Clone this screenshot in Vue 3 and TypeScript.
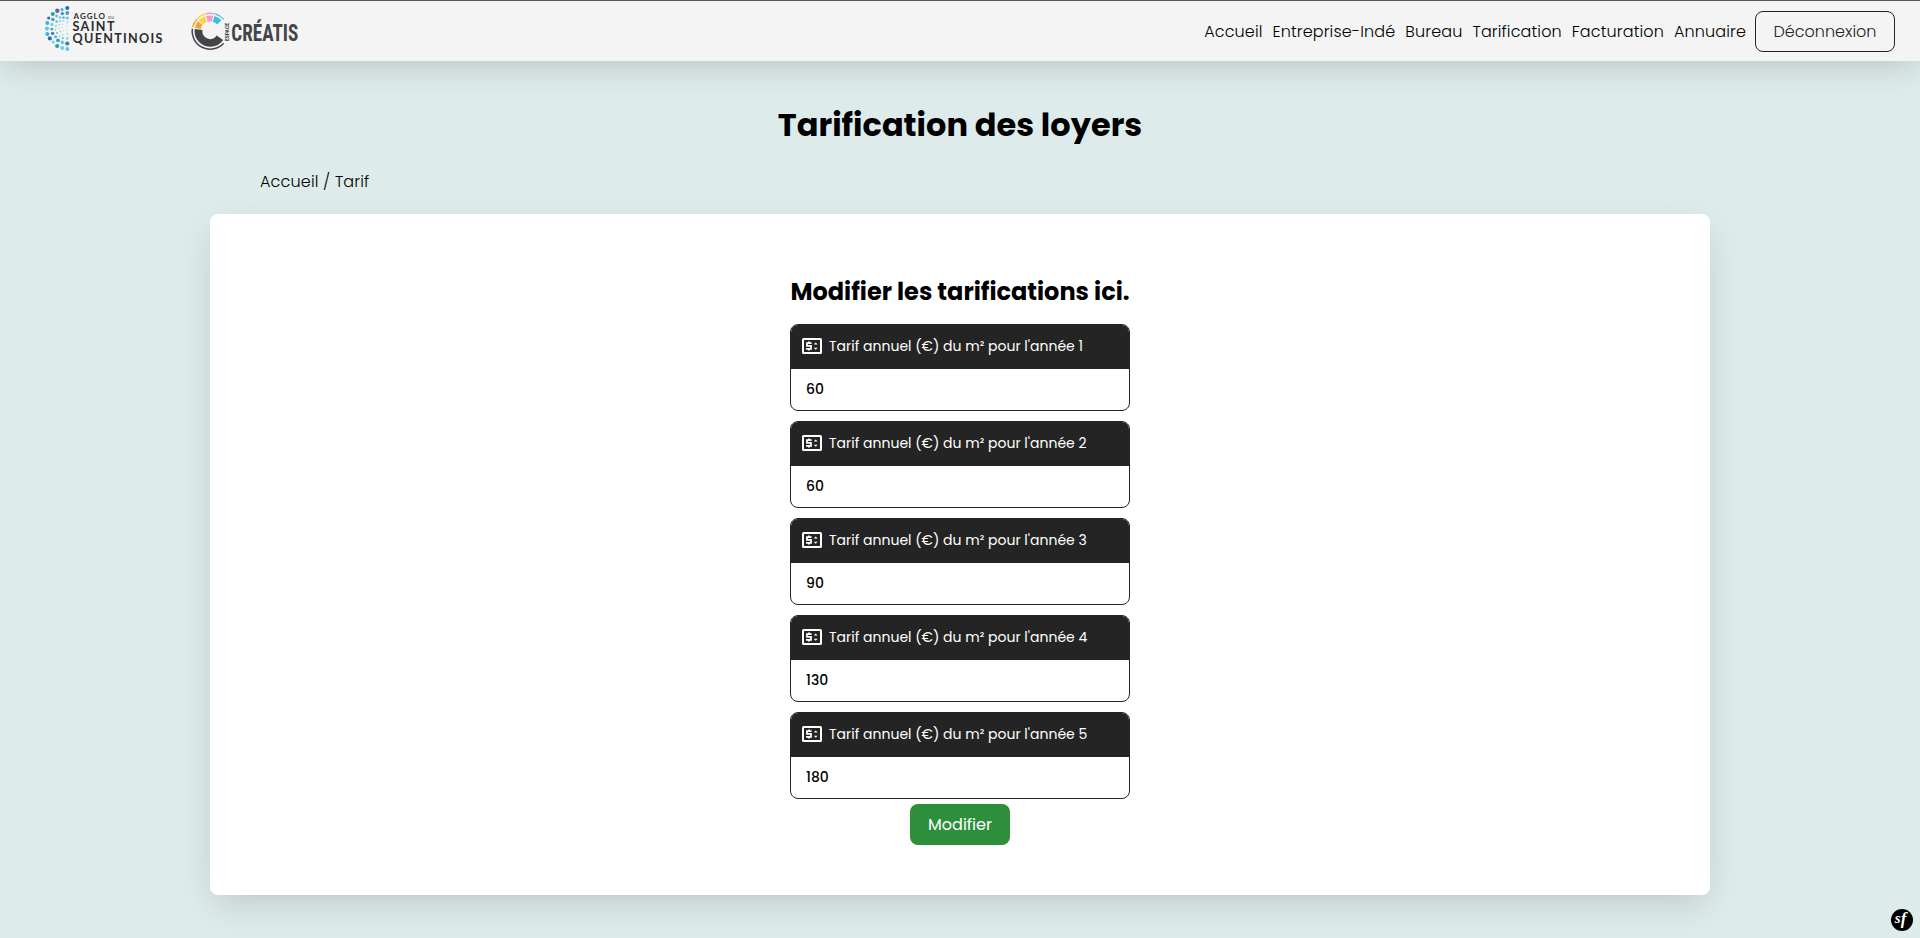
<script setup lang="ts">
import { ref } from 'vue'

interface Rate {
  year: number
  amount: string
}

interface Dot {
  x: number
  y: number
  r: number
  c: string
}

const links: string[] = ['Accueil', 'Entreprise-Indé', 'Bureau', 'Tarification', 'Facturation', 'Annuaire']

const rates = ref<Rate[]>([
  { year: 1, amount: '60' },
  { year: 2, amount: '60' },
  { year: 3, amount: '90' },
  { year: 4, amount: '130' },
  { year: 5, amount: '180' },
])

const dots: Dot[] = [
  { x: 67.3, y: 8, r: 2.1, c: '#2173b9' },
  { x: 62, y: 9.6, r: 1.5, c: '#35b3dc' },
  { x: 57.3, y: 10.8, r: 2.2, c: '#6f5bab' },
  { x: 52.8, y: 14, r: 2, c: '#27a58c' },
  { x: 62.3, y: 13.6, r: 1.6, c: '#2b8fcb' },
  { x: 67.3, y: 13, r: 1.9, c: '#3f9dd7' },
  { x: 48.7, y: 18, r: 1.6, c: '#2173b9' },
  { x: 56.7, y: 16, r: 1.4, c: '#56c4e5' },
  { x: 60, y: 17.5, r: 1.2, c: '#6bcbd6' },
  { x: 67.3, y: 18, r: 1.5, c: '#65c5e8' },
  { x: 63.6, y: 17.6, r: 1.2, c: '#4f9dcc' },
  { x: 52.8, y: 19.5, r: 1.8, c: '#3aa3d8' },
  { x: 47.3, y: 23, r: 2, c: '#3bb5df' },
  { x: 52, y: 24.4, r: 1.7, c: '#75cde9' },
  { x: 56.6, y: 21.6, r: 1.2, c: '#4fc0bc' },
  { x: 47, y: 28.6, r: 2.1, c: '#62c6e8' },
  { x: 51.8, y: 29, r: 1.5, c: '#35b3dc' },
  { x: 47.3, y: 34, r: 2, c: '#35b3dc' },
  { x: 52.6, y: 33.4, r: 1.7, c: '#2e83c4' },
  { x: 49.8, y: 38.4, r: 2.1, c: '#2173b9' },
  { x: 55.6, y: 36.7, r: 1.5, c: '#48bfd9' },
  { x: 53.2, y: 42, r: 1.6, c: '#75cde9' },
  { x: 58, y: 40.3, r: 1.9, c: '#4495ce' },
  { x: 57.2, y: 46, r: 2.1, c: '#27a58c' },
  { x: 62.3, y: 42.4, r: 1.8, c: '#62c6e8' },
  { x: 67.3, y: 43.5, r: 2.1, c: '#2c7fc0' },
  { x: 62.3, y: 48, r: 1.9, c: '#75cde9' },
  { x: 67.3, y: 49, r: 2, c: '#65c5e8' },
  { x: 67.3, y: 38.5, r: 1.4, c: '#8cd6ec' },
  { x: 62.8, y: 38, r: 1.1, c: '#5cc3bd' },
  { x: 59.6, y: 36.2, r: 0.9, c: '#8ad7d1' },
  { x: 55.8, y: 26, r: 1, c: '#8bd4d5' },
  { x: 55.5, y: 29.6, r: 0.9, c: '#80d2c8' },
  { x: 57, y: 33, r: 1, c: '#65c5c0' },
  { x: 60, y: 21, r: 1, c: '#79cfce' },
  { x: 63.5, y: 21, r: 0.9, c: '#9bdcd9' },
  { x: 67.3, y: 22.3, r: 1.1, c: '#a7dcee' },
  { x: 59, y: 24.5, r: 0.8, c: '#8edbc5' },
  { x: 62.3, y: 24.2, r: 0.8, c: '#abdedf' },
  { x: 59, y: 28, r: 0.8, c: '#95dad6' },
  { x: 62.2, y: 27.6, r: 0.7, c: '#a3dfd1' },
  { x: 60.2, y: 31.5, r: 0.8, c: '#7bcfca' },
  { x: 63.6, y: 31, r: 0.7, c: '#b3e2df' },
  { x: 63, y: 34.7, r: 0.8, c: '#8ad7d1' },
  { x: 67.3, y: 26, r: 0.8, c: '#bde3ec' },
  { x: 67.3, y: 29.5, r: 0.7, c: '#bde3ec' },
  { x: 67.3, y: 34, r: 1, c: '#a7dcee' },
]

// Arc of the Créatis ring between two angles in degrees, clockwise from the right.
function arc(radius: number, from: number, to: number): string {
  const at = (a: number) => {
    const t = (a * Math.PI) / 180
    return `${(210.2 + radius * Math.cos(t)).toFixed(2)} ${(31.2 + radius * Math.sin(t)).toFixed(2)}`
  }
  return `M${at(from)}A${radius} ${radius} 0 ${to - from > 180 ? 1 : 0} 1 ${at(to)}`
}

const ring = [
  { from: 193, to: 219, color: '#f2a33a' },
  { from: 224, to: 250, color: '#fbd53f' },
  { from: 255, to: 281, color: '#f19bc9' },
  { from: 286, to: 316, color: '#3bbfe0' },
]
</script>

<template>
  <div class="page">
    <header class="topbar">
      <svg class="logos" width="310" height="60" viewBox="0 1 310 60">
        <circle v-for="(d, i) in dots" :key="i" :cx="d.x" :cy="d.y" :r="d.r" :fill="d.c" />
        <g class="agglo">
          <text x="73.5" y="19.3" font-size="8" textLength="31.5">AGGLO</text>
          <text x="108" y="19.3" font-size="3.8" textLength="6" font-weight="400">DU</text>
          <text x="72.5" y="31" font-size="12.6" textLength="42">SAINT</text>
          <text x="72.5" y="43" font-size="12.6" textLength="90">QUENTINOIS</text>
        </g>
        <g fill="none">
          <path :d="arc(11.7, 34, 188)" stroke="#454549" stroke-width="7.8" />
          <path :d="arc(18, 42, 188)" stroke="#454549" stroke-width="1.5" />
          <template v-for="s in ring" :key="s.from">
            <path :d="arc(12.8, s.from, s.to)" :stroke="s.color" stroke-width="6" />
            <path :d="arc(18, s.from, s.to + 3)" :stroke="s.color" stroke-width="1.4" />
          </template>
        </g>
        <g class="creatis">
          <text
            transform="translate(229.2 41) rotate(-90)"
            font-size="5.8"
            textLength="18"
            lengthAdjust="spacingAndGlyphs"
          >ESPACE</text>
          <text x="231.3" y="41" font-size="24" textLength="67" lengthAdjust="spacingAndGlyphs">CRÉATIS</text>
        </g>
      </svg>
      <nav class="nav">
        <a v-for="link in links" :key="link">{{ link }}</a>
        <button class="logout" type="button">Déconnexion</button>
      </nav>
    </header>

    <main>
      <h1>Tarification des loyers</h1>
      <div class="crumbs">Accueil / Tarif</div>
      <section class="card">
        <h2>Modifier les tarifications ici.</h2>
        <form class="rates">
          <div v-for="rate in rates" :key="rate.year" class="rate">
            <label>
              <svg width="22" height="18" viewBox="0 0 22 18">
                <rect x="2" y="2" width="18" height="14" rx="0.6" fill="none" stroke="#fff" stroke-width="2" />
                <path d="M10.6 6.2H6v2.7h4v2.9H5M8 4.4v1.8M8 11.8v1.8" fill="none" stroke="#fff" stroke-width="1.8" />
                <path d="M12.7 7.4l2-2 2 2zM12.7 10.8l2 2 2-2z" fill="#fff" />
              </svg>
              <span>Tarif annuel (€) du m² pour l'année {{ rate.year }}</span>
            </label>
            <div class="amount">{{ rate.amount }}</div>
          </div>
          <button class="submit" type="button">Modifier</button>
        </form>
      </section>
    </main>

    <div class="debug">
      <svg width="22" height="22" viewBox="0 0 22 22">
        <circle cx="11" cy="11" r="11" fill="#000" />
        <text x="3.8" y="14.4" font-size="15">s</text>
        <text x="9.8" y="14.8" font-size="17">f</text>
      </svg>
    </div>
  </div>
</template>

<style>
body {
  margin: 0;
  background: #ddebea;
}
</style>

<style scoped>
.page {
  position: relative;
  box-sizing: border-box;
  height: 938px;
  overflow: hidden;
  background: #ddebea;
  color: #000;
  font-family: Poppins, Inter, sans-serif;
  font-size: 16px;
}
.topbar {
  display: flex;
  align-items: center;
  justify-content: space-between;
  box-sizing: border-box;
  height: 61px;
  padding-right: 25px;
  border-top: 1px solid #58585a;
  background: #f4f4f4;
  box-shadow: 0 10px 30px -5px rgba(0, 0, 0, 0.16);
}
.logos {
  display: block;
}
.agglo {
  font-family: Lato, sans-serif;
  font-weight: 700;
  fill: #2c2c2e;
}
.creatis {
  font-family: 'Roboto Condensed', Roboto, sans-serif;
  font-weight: 700;
  fill: #454549;
}
.nav {
  display: flex;
  align-items: center;
  gap: 10px;
  font-weight: 300;
}
.nav a {
  letter-spacing: 0.13px;
}
button {
  padding: 0;
  font: inherit;
  border-radius: 8px;
}
.logout {
  width: 140px;
  height: 41px;
  margin-left: -1px;
  border: 1px solid #242424;
  background: transparent;
  color: #242424;
}
h1 {
  margin: 39px 0 0;
  font-size: 32px;
  line-height: 50px;
  font-weight: 700;
  text-align: center;
}
.crumbs {
  margin: 20px 0 0 260px;
  line-height: 24px;
  font-weight: 300;
  letter-spacing: 0.16px;
}
.card {
  display: flex;
  flex-direction: column;
  align-items: center;
  box-sizing: border-box;
  width: 1500px;
  height: 681px;
  margin: 20px auto 0;
  padding-top: 60px;
  border-radius: 8px;
  background: #fff;
  box-shadow: 0 12px 35px -5px rgba(0, 0, 0, 0.15);
}
h2 {
  margin: 0;
  font-size: 24px;
  line-height: 36px;
  font-weight: 700;
}
.rates {
  display: flex;
  flex-direction: column;
  align-items: center;
  gap: 10px;
  margin-top: 14px;
}
.rate {
  box-sizing: border-box;
  width: 340px;
  height: 87px;
  overflow: hidden;
  border: 1px solid #242424;
  border-radius: 8px;
  background: #fff;
  font-size: 14px;
}
.rate label {
  display: flex;
  align-items: center;
  gap: 6px;
  box-sizing: border-box;
  height: 44px;
  padding: 0 0 2px 10px;
  background: #242424;
  color: #fff;
}
.amount {
  padding-left: 15px;
  line-height: 41px;
  font-weight: 500;
}
.submit {
  width: 100px;
  height: 41px;
  margin-top: -5px;
  border: 0;
  background: #2d8f3c;
  color: #fff;
}
.debug {
  position: absolute;
  right: 7px;
  bottom: 7px;
  width: 22px;
  height: 22px;
}
.debug svg {
  display: block;
}
.debug text {
  font-family: 'Liberation Serif', serif;
  font-style: italic;
  font-weight: 700;
  fill: #fff;
}
</style>
